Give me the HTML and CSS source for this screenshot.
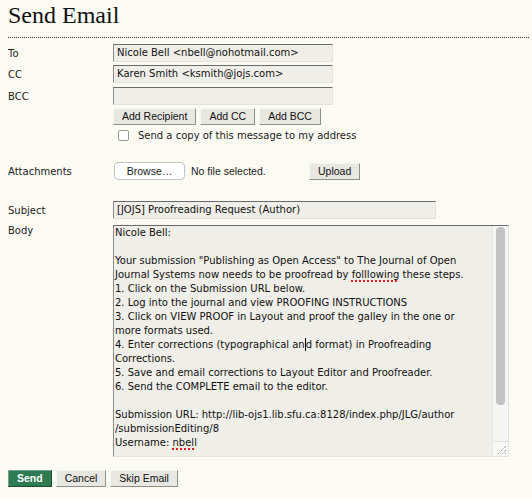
FILE: index.html
```html
<!DOCTYPE html>
<html>
<head>
<meta charset="utf-8">
<title>Send Email</title>
<link rel="stylesheet" href="styles.css">
</head>
<body>
<div class="page">
  <h1 class="title">Send Email</h1>
  <form class="form">
    <div class="row row-to">
      <label class="lbl">To</label>
      <div class="input w220">Nicole Bell &lt;nbell@nohotmail.com&gt;</div>
    </div>
    <div class="row row-cc">
      <label class="lbl">CC</label>
      <div class="input w220">Karen Smith &lt;ksmith@jojs.com&gt;</div>
    </div>
    <div class="row row-bcc">
      <label class="lbl">BCC</label>
      <div class="input w220"></div>
    </div>
    <div class="row row-btns">
      <span></span>
      <div class="btns">
        <span class="btn">Add Recipient</span>
        <span class="btn">Add CC</span>
        <span class="btn">Add BCC</span>
      </div>
    </div>
    <div class="row row-copy">
      <span></span>
      <div class="copy"><span class="check"></span><span class="copy-text">Send a copy of this message to my address</span></div>
    </div>
    <div class="row row-attach">
      <label class="lbl">Attachments</label>
      <div class="attach">
        <span class="browse">Browse…</span>
        <span class="file-name">No file selected.</span>
        <span class="btn">Upload</span>
      </div>
    </div>
    <div class="row row-subject">
      <label class="lbl">Subject</label>
      <div class="input w323">[JOJS] Proofreading Request (Author)</div>
    </div>
    <div class="row row-body">
      <label class="lbl lbl-top">Body</label>
      <div class="body-box">
        <div class="body-text">Nicole Bell:<br><br>Your submission "Publishing as Open Access" to The Journal of Open<br>Journal Systems now needs to be proofread by <span class="spell">folllowing</span> these steps.<br>1. Click on the Submission URL below.<br>2. Log into the journal and view PROOFING INSTRUCTIONS<br>3. Click on VIEW PROOF in Layout and proof the galley in the one or<br>more formats used.<br>4. Enter corrections (typographical an<span class="caret"></span>d format) in Proofreading<br>Corrections.<br>5. Save and email corrections to Layout Editor and Proofreader.<br>6. Send the COMPLETE email to the editor.<br><br>Submission URL: http://lib-ojs1.lib.sfu.ca:8128/index.php/JLG/author<br>/submissionEditing/8<br>Username: <span class="spell">nbell</span></div>
        <div class="scroll">
          <div class="track"><div class="thumb"></div></div>
          <div class="grip">
            <svg width="14" height="14" viewBox="0 0 14 14"><path d="M12 4 L4 12 M12 8 L8 12 M12 11 L11 12" stroke="#777" stroke-width="1" stroke-dasharray="1 1" fill="none"/></svg>
          </div>
        </div>
      </div>
    </div>
    <div class="actions">
      <span class="btn btn-send">Send</span>
      <span class="btn">Cancel</span>
      <span class="btn">Skip Email</span>
    </div>
  </form>
</div>
</body>
</html>
```

FILE: styles.css
```css
html, body {
  margin: 0;
  padding: 0;
  background: #fbfaf3;
}
.page {
  padding: 0 3px 0 8px;
  font-family: "DejaVu Sans", Verdana, sans-serif;
  font-size: 10px;
  color: #1a1a1a;
}
.title {
  margin: 0;
  padding: 1px 0 8px;
  font-family: "Liberation Serif", "Times New Roman", serif;
  font-weight: normal;
  font-size: 24px;
  line-height: 28px;
  color: #111;
  border-bottom: 1px dotted #333;
}
.form {
  display: block;
}
.row {
  display: grid;
  grid-template-columns: 105px auto;
  align-items: center;
}
.lbl {
  color: #222;
}
.lbl-top {
  align-self: start;
  padding-top: 0px;
}
.row-to { margin-top: 6px; }
.row-cc { margin-top: 3px; }
.row-bcc { margin-top: 4px; }
.row-btns { margin-top: 3px; }
.row-copy { margin-top: 4px; }
.row-attach { margin-top: 21px; }
.row-subject { margin-top: 21px; }
.row-body { margin-top: 6px; }

.input {
  box-sizing: border-box;
  height: 18px;
  line-height: 16px;
  padding: 0 3px;
  background: #efeee8;
  border: 1px solid;
  border-color: #6a6a6a #e3e2dc #e3e2dc #8c8c8c;
  color: #111;
  white-space: nowrap;
  overflow: hidden;
}
.w220 { width: 220px; }
.w323 { width: 323px; }

.btns, .attach, .actions {
  display: flex;
  align-items: center;
}
.btns { gap: 4px; }
.btn {
  box-sizing: border-box;
  display: inline-block;
  height: 17px;
  line-height: 15px;
  padding: 0 8px;
  font-family: "Liberation Sans", Arial, sans-serif;
  font-size: 10.5px;
  color: #111;
  background: #e8e7e1;
  border: 1px solid;
  border-color: #f6f6f2 #8e8e8a #8e8e8a #f6f6f2;
  white-space: nowrap;
}
.copy {
  display: flex;
  align-items: center;
  height: 12px;
}
.check {
  box-sizing: border-box;
  width: 11px;
  height: 11px;
  margin-left: 5px;
  background: #fff;
  border: 1px solid #9a9a9a;
  border-radius: 2px;
}
.copy-text {
  margin-left: 9px;
}
.browse {
  box-sizing: border-box;
  width: 71px;
  height: 18px;
  line-height: 16px;
  margin-left: 1px;
  text-align: center;
  font-family: "Liberation Sans", Arial, sans-serif;
  font-size: 10.5px;
  background: #fff;
  border: 1px solid #c2c2c2;
  border-radius: 4px;
}
.file-name {
  width: 118px;
  margin-left: 6px;
  font-family: "Liberation Sans", Arial, sans-serif;
  font-size: 10.5px;
}
.body-box {
  box-sizing: border-box;
  display: flex;
  width: 396px;
  height: 232px;
  background: #efeee8;
  border: 1px solid;
  border-color: #6a6a6a #e3e2dc #e3e2dc #8c8c8c;
}
.body-text {
  flex: 1;
  padding: 0 2px 0 1px;
  line-height: 14px;
  color: #111;
  white-space: nowrap;
  overflow: hidden;
}
.spell {
  text-decoration: underline dotted #e02020;
  text-decoration-thickness: 2px;
  text-underline-offset: 2px;
}
.caret {
  display: inline-block;
  width: 1px;
  height: 13px;
  background: #000;
  vertical-align: -3px;
}
.scroll {
  width: 15px;
  display: flex;
  flex-direction: column;
  background: #f5f5f3;
  border-left: 1px solid #e6e6e2;
}
.track {
  flex: 1;
  padding: 1px 3px 0;
}
.thumb {
  height: 178px;
  border-radius: 4px;
  background: #c2c2c2;
}
.grip {
  height: 14px;
  background: #f8f8f6;
  border-top: 1px solid #e2e2de;
  display: flex;
  justify-content: flex-end;
  align-items: flex-end;
}
.actions {
  margin-top: 13px;
  gap: 4px;
}
.btn-send {
  color: #fff;
  font-weight: bold;
  background: #2f7a52;
  border-color: #6ea587 #1c4b31 #1c4b31 #6ea587;
}
```
